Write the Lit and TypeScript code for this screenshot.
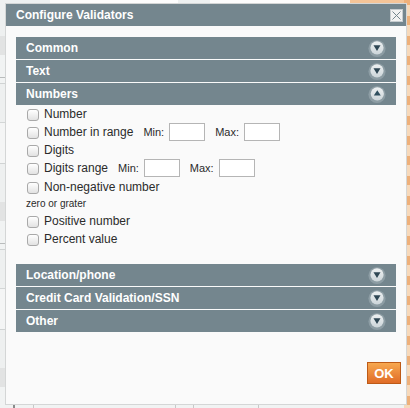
import { LitElement, html, css, svg } from "lit";
import { customElement } from "lit/decorators.js";

const chevron = (up: boolean) => html`<svg class="chev" width="20" height="20" viewBox="0 0 20 20">
  <defs><linearGradient id="g${up ? "u" : "d"}" x1="0" y1="0" x2="0" y2="1"><stop offset="0" stop-color="#eef1f2"/><stop offset="1" stop-color="#ccd5d9"/></linearGradient></defs>
  <circle cx="10" cy="10.5" r="8.6" fill="#8d9da4"/>
  <circle cx="${up ? 10.3 : 10}" cy="9.8" r="6.6" fill="url(#g${up ? "u" : "d"})"/>
  ${up
    ? svg`<path d="M10.3 6.2 L13.8 11.6 H6.8 Z" fill="#2f4f5f"/>`
    : svg`<path d="M6.5 7.2 H13.5 L10 13 Z" fill="#2f4754"/>`}
</svg>`;

@customElement("app-root")
export class AppRoot extends LitElement {
  static styles = css`
    :host {
      display: block;
      box-sizing: border-box;
      width: 410px;
      height: 408px;
      padding: 3px 3px 3px 5px;
      font-family: "Liberation Sans", Arial, sans-serif;
      color: #2b2b2b;
      background-color: #f0f2f2;
      background-image:
        linear-gradient(#f6d9bb 0 11px, #eeb07a 11px 20px),
        linear-gradient(#fdfdfd, #fdfdfd),
        linear-gradient(#fdfdfd, #fdfdfd),
        linear-gradient(#f4c498, #f4c498),
        linear-gradient(#8a8a8a, #8a8a8a),
        linear-gradient(#c8c8c8, #c8c8c8),
        linear-gradient(#c8c8c8, #c8c8c8),
        linear-gradient(#c8c8c8, #c8c8c8),
        linear-gradient(#c8c8c8, #c8c8c8),
        linear-gradient(
          #eef0f0 0 36px,
          #e2e3e3 36px 55px,
          #f1f3f3 55px 77px,
          #b9bcbc 77px 78px,
          #f1f3f3 78px 83px,
          #d0d3d3 83px 84px,
          #eef0f0 84px 122px,
          #d3d6d6 122px 123px,
          #f4f5f5 123px 163px,
          #d0d3d3 163px 164px,
          #eef0f0 164px 166px
        );
      background-size: 6px 20px, 128px 3px, 140px 3px, 60px 3px, 2px 4px, 1px 4px, 1px 4px, 1px 4px, 1px 4px, 100% 166px;
      background-position: 404px 165px, 50px 0, 210px 0, 350px 0, 13px 404px, 33px 404px, 175px 404px, 193px 404px, 258px 404px, 0 0;
      background-repeat: repeat-y, no-repeat, no-repeat, no-repeat, no-repeat, no-repeat, no-repeat, no-repeat, no-repeat, repeat-y;
    }
    .dialog {
      box-sizing: border-box;
      width: 402px;
      height: 402px;
      border: 1px solid #d4d6d6;
      background: #fafafa;
      display: flex;
      flex-direction: column;
    }
    .title {
      height: 22px;
      flex: none;
      background: #74868e;
      color: #fff;
      font-weight: bold;
      font-size: 12px;
      display: flex;
      align-items: center;
      justify-content: space-between;
      padding: 0 3px 0 10px;
    }
    .close {
      width: 13px;
      height: 13px;
      background: #f2f2f2;
      border: 1px solid #c6cccf;
      box-sizing: border-box;
      display: flex;
      align-items: center;
      justify-content: center;
    }
    .body {
      flex: 1;
      padding: 11px 10px 0;
      display: flex;
      flex-direction: column;
    }
    .bars { display: flex; flex-direction: column; gap: 1px; }
    .bar {
      height: 22px;
      background: #74868e;
      color: #fff;
      font-weight: bold;
      font-size: 12px;
      display: flex;
      align-items: center;
      justify-content: space-between;
      padding: 0 9px 0 10px;
    }
    .chev { display: block; }
    .list {
      height: 159px;
      padding: 0 0 0 11px;
      display: flex;
      flex-direction: column;
      font-size: 12px;
    }
    .row {
      height: 18px;
      display: flex;
      align-items: center;
      flex: none;
      white-space: nowrap;
    }
    .box {
      width: 12px;
      height: 12px;
      box-sizing: border-box;
      margin: 2px 5px 0 0;
      border: 1px solid #a9a9a9;
      border-radius: 3px;
      background: linear-gradient(#ffffff, #e2e2e2);
      flex: none;
      appearance: none;
      padding: 0;
    }
    .small { font-size: 11px; }
    .min { margin-left: 10px; margin-right: 5px; }
    .max { margin-left: 10px; margin-right: 5px; }
    .num {
      width: 36px;
      height: 18px;
      box-sizing: border-box;
      border: 1px solid #b5b5b5;
      background: #fff;
      padding: 0;
      margin: 0;
    }
    .note {
      height: 15px;
      flex: none;
      font-size: 10px;
      line-height: 15px;
      margin-left: -1px;
      margin-bottom: 1px;
    }
    .gap1 { margin-top: 1px; }
    .foot {
      flex: 1;
      display: flex;
      justify-content: flex-end;
      align-items: flex-start;
      padding: 30px 0 0 0;
      margin-right: -5px;
    }
    .ok {
      width: 34px;
      height: 22px;
      box-sizing: border-box;
      border: 1px solid #bd5a17;
      background: linear-gradient(#f7a84f, #e06c27);
      color: #fff;
      font: bold 13px "Liberation Sans", Arial, sans-serif;
      padding: 0;
    }
  `;

  private bar(name: string, up = false) {
    return html`<div class="bar"><span>${name}</span>${chevron(up)}</div>`;
  }

  private range() {
    return html`<span class="small min">Min:</span><input class="num" type="text" /><span class="small max">Max:</span><input class="num" type="text" />`;
  }

  render() {
    return html`<div class="dialog">
      <div class="title">
        <span>Configure Validators</span>
        <div class="close">
          <svg width="11" height="11" viewBox="0 0 11 11"><path d="M1.5 1.5 L9.5 9.5 M9.5 1.5 L1.5 9.5" stroke="#74868e" stroke-width="1" fill="none"/></svg>
        </div>
      </div>
      <div class="body">
        <div class="bars">
          ${this.bar("Common")}${this.bar("Text")}${this.bar("Numbers", true)}
        </div>
        <div class="list">
          <div class="row"><input type="checkbox" class="box" />Number</div>
          <div class="row"><input type="checkbox" class="box" />Number in range${this.range()}</div>
          <div class="row"><input type="checkbox" class="box" />Digits</div>
          <div class="row"><input type="checkbox" class="box" />Digits range${this.range()}</div>
          <div class="row gap1"><input type="checkbox" class="box" />Non-negative number</div>
          <div class="note">zero or grater</div>
          <div class="row"><input type="checkbox" class="box" />Positive number</div>
          <div class="row"><input type="checkbox" class="box" />Percent value</div>
        </div>
        <div class="bars">
          ${this.bar("Location/phone")}${this.bar("Credit Card Validation/SSN")}${this.bar("Other")}
        </div>
        <div class="foot"><button class="ok">OK</button></div>
      </div>
    </div>`;
  }
}
